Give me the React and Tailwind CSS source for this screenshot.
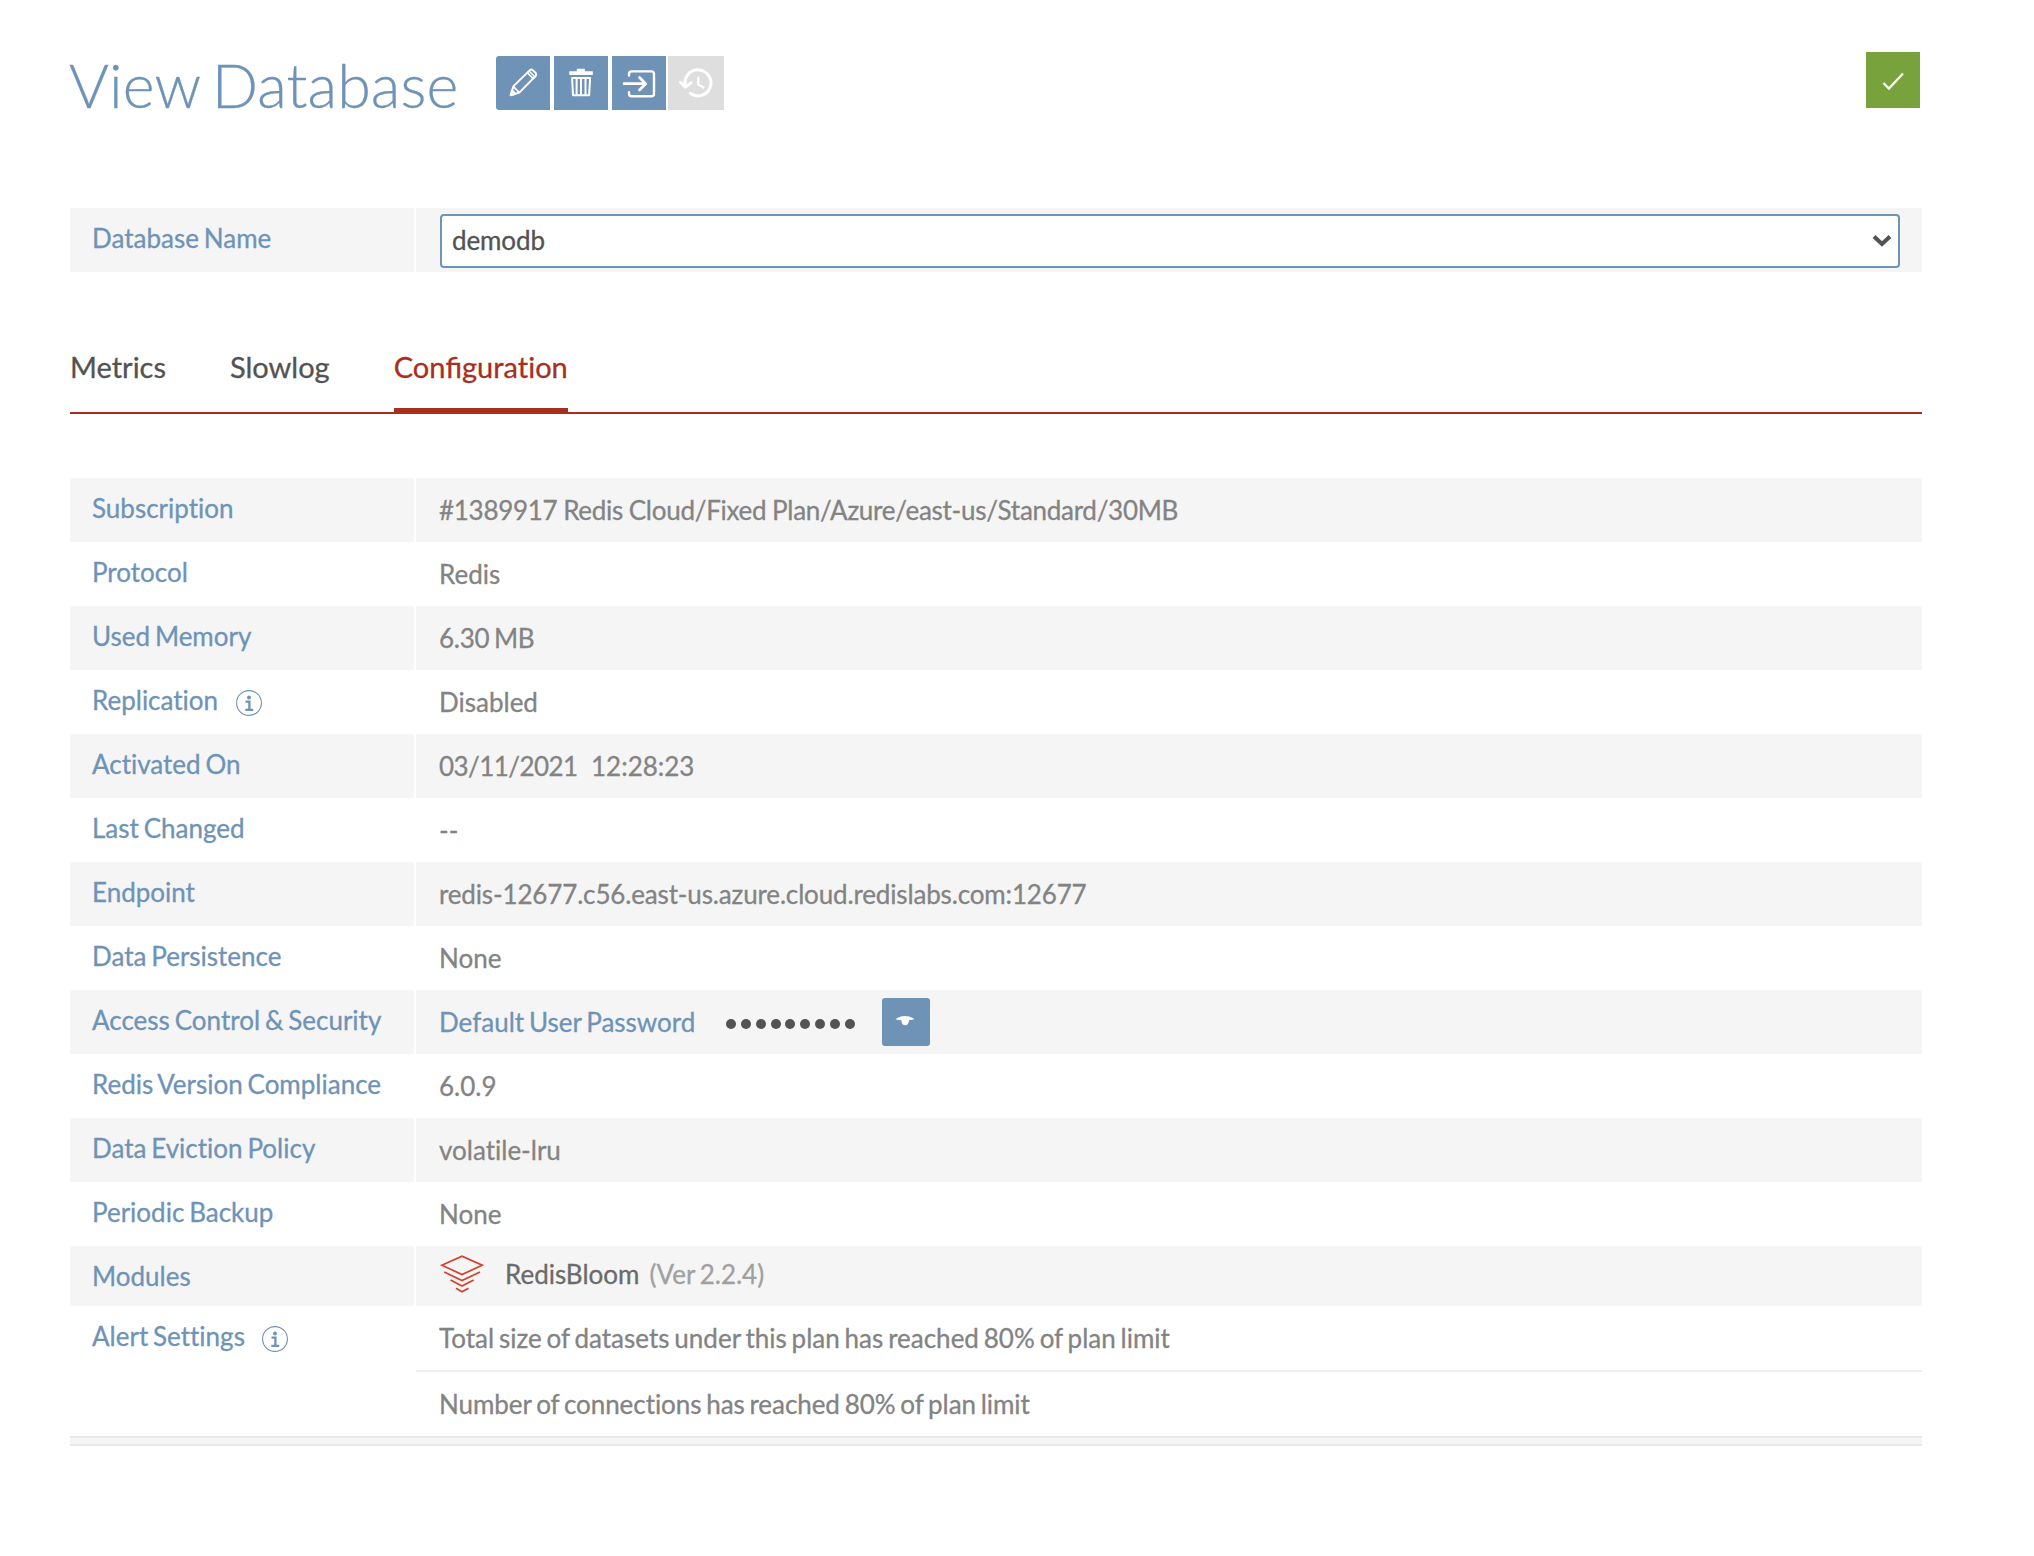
const INFO = (
  <svg className="size-[26px]" viewBox="0 0 26 26" fill="none" stroke="#6e93b6">
    <circle cx="13" cy="13" r="12.4" strokeWidth="1.1" />
    <circle cx="13" cy="7.600" r="2" fill="#6e93b6" stroke="none" />
    <path d="M9.500 11.700H13.400V19.600M9.300 19.900H17.200" strokeWidth="2.300" />
  </svg>
);

function Tool({ children, className = "" }) {
  return (
    <button className={`flex h-[54px] w-[54px] items-center justify-center bg-[#6e93b6] ${className}`}>
      {children}
    </button>
  );
}

function PencilIcon() {
  return (
    <svg className="size-[54px]" viewBox="0 0 54 54" fill="none" stroke="#fff" strokeWidth="2" strokeLinejoin="round">
      <path d="M15 39l2.300-8.600L33.600 14.400c1-1 2.400-1 3.400 0l2.400 2.400c1 1 1 2.400 0 3.400L23.300 36.600z" />
      <path d="M31.300 16.700l6 6M33 15l6 6M17.300 30.400l6 6.200" strokeWidth="1.600" />
      <path d="M14.600 39.300l1.300-5 3.600 3.600z" fill="#fff" />
    </svg>
  );
}

function TrashIcon() {
  return (
    <svg className="size-[54px]" viewBox="0 0 54 54" fill="none" stroke="#fff">
      <path d="M15.300 15.200h7.500v-2.400h8v2.400h8v3.700H15.300z" fill="#fff" stroke="none" />
      <path d="M18.100 22h18l-1 17.200H19z" strokeWidth="2" strokeLinejoin="round" />
      <path d="M22.600 23v15.500M27 23v15.500M31.500 23v15.500" strokeWidth="2" />
    </svg>
  );
}

function ExportIcon() {
  return (
    <svg className="size-[54px]" viewBox="0 0 54 54" fill="none" stroke="#fff" strokeWidth="2.400" strokeLinecap="round" strokeLinejoin="round">
      <path d="M17 19.500v-1.500a2.600 2.600 0 0 1 2.600-2.600H39.400a2.600 2.600 0 0 1 2.600 2.600V37.700a2.600 2.600 0 0 1-2.600 2.600H19.600a2.600 2.600 0 0 1-2.600-2.600V36.200" />
      <path d="M12 27.700H33M27.500 21.500l6.200 6.200-6.200 6.300" strokeWidth="2.700" />
    </svg>
  );
}

function HistoryIcon() {
  return (
    <svg className="size-[54px]" viewBox="0 0 54 54" fill="none" stroke="#fff" strokeWidth="3" strokeLinecap="round" strokeLinejoin="round">
      <path d="M17.200 29.500a13 13 0 1 1 5 7.800" />
      <path d="M12.500 26.300l5 4.900 5.500-4.400" />
      <path d="M30.300 21.700v6.800l5.200 3" strokeWidth="2.200" />
    </svg>
  );
}

function BloomIcon() {
  return (
    <svg className="h-[38px] w-[44px]" viewBox="0 0 44 38" fill="none" stroke="#d4402f" strokeWidth="1.700">
      <path d="M1.800 10.200L22 1.200l20.200 9L22 19.500z" />
      <path d="M4.200 17l17.800 8.500L40 17M10.500 25l11.500 6 11.700-6M16 33.200l6 3.600 6.500-3.600" />
    </svg>
  );
}

function Row({ label, info, shaded, height = "h-16", children }) {
  const bg = shaded ? "bg-[#f5f5f5]" : "bg-white";
  return (
    <div className={`flex gap-[2px] ${height}`}>
      <div className={`flex w-[344px] shrink-0 items-start gap-[17.5px] pl-[22px] text-[#6e93b6] ${bg}`}>
        <span className="leading-[60px]">{label}</span>
        {info && <span className="mt-[20px]">{INFO}</span>}
      </div>
      <div className={`flex grow items-center pl-[23px] text-[#838383] ${bg}`}>{children}</div>
    </div>
  );
}

export default function App() {
  return (
    <main className="h-[1556px] w-[2034px] bg-white pl-[70px] font-['Lato',sans-serif] text-[26px] leading-[64px] whitespace-pre [word-spacing:-1.8px] [font-variant-ligatures:none] [-webkit-text-stroke:0.3px]">
      <div className="w-[1852px]">
        <header className="flex h-[208px] items-start">
          <h1 className="mt-[49px] -ml-px w-[427px] text-[61px] leading-[72px] font-light tracking-[0.1px] text-[#6e93b6] [word-spacing:-5px]">View Database</h1>
          <div className="mt-[56px] flex">
            <Tool className="rounded-l-[3px]"><PencilIcon /></Tool>
            <Tool className="ml-1"><TrashIcon /></Tool>
            <Tool className="ml-1"><ExportIcon /></Tool>
            <div className="ml-[2px] flex h-[54px] w-[56px] items-center bg-[#dedede]"><HistoryIcon /></div>
          </div>
          <div className="mt-[52px] mr-[2px] ml-auto h-[56px] w-[54px] bg-[#78a23c]">
            <svg className="h-[56px] w-[54px]" viewBox="0 0 54 56" fill="none" stroke="#fff" strokeWidth="2.200">
              <path d="M17.500 31l5.400 5.600L37 21.500" />
            </svg>
          </div>
        </header>

        <Row label="Database Name" shaded>
          <div className="mt-[2px] mr-[22px] ml-px flex h-[54px] grow items-center justify-between rounded-[4px] border-2 border-[#6e93b6] bg-white pr-[6px] pl-[10px] text-[#535353]">
            <span className="mt-[-2px] leading-[50px] tracking-[-0.1px]">demodb</span>
            <svg className="h-[14px] w-[20px]" viewBox="0 0 20 14" fill="none" stroke="#535353" strokeWidth="4">
              <path d="M2 2.500l8 7.500 8-7.500" />
            </svg>
          </div>
        </Row>

        <nav className="mt-[66px] flex h-[76px] gap-[64px] border-b-2 border-[#a72f20] text-[29px] leading-[58px] text-[#535353]">
          <span>Metrics</span>
          <span>Slowlog</span>
          <span className="h-[76px] border-b-[6px] border-[#a72f20] text-[#a72f20]">
            Con<span className="[font-variant-ligatures:normal]">fi</span>guration
          </span>
        </nav>

        <section className="mt-[64px]">
          <Row label="Subscription" shaded>
            <span className="tracking-[-0.28px] [word-spacing:-0.6px]">#1389917 Redis Cloud/Fixed Plan/Azure/east-us/Standard/30MB</span>
          </Row>
          <Row label="Protocol">Redis</Row>
          <Row label="Used Memory" shaded><span className="tracking-[-0.25px]">6.30 MB</span></Row>
          <Row label="Replication" info>Disabled</Row>
          <Row label="Activated On" shaded>
            <span><span className="tracking-[-0.55px]">03/11/2021</span><span className="[word-spacing:0px]">  </span>12:28:23</span>
          </Row>
          <Row label="Last Changed">--</Row>
          <Row label="Endpoint" shaded>
            <span className="tracking-[-0.15px]">redis-12677.c56.east-us.azure.cloud.redislabs.com:12677</span>
          </Row>
          <Row label="Data Persistence">None</Row>
          <Row label="Access Control & Security" shaded>
            <span className="text-[#6e93b6]">Default User Password</span>
            <span className="mt-[4px] ml-[30.6px] flex gap-[4.87px]">
              {Array.from({ length: 9 }, (_, i) => (
                <i key={i} className="size-[10px] rounded-full bg-[#535353]" />
              ))}
            </span>
            <span className="ml-[27px] size-12 rounded-[3px] bg-[#6e93b6]">
              <svg className="size-12" viewBox="0 0 48 48" fill="#fff">
                <path d="M13.500 21.200c5-4.300 14-4.300 19 0-2 .500-4 .900-5.500 1 0 3-1.500 5-3.800 5s-3.800-2-3.800-5c-2-.1-4-.5-5.900-1z" />
              </svg>
            </span>
          </Row>
          <Row label="Redis Version Compliance">6.0.9</Row>
          <Row label="Data Eviction Policy" shaded>volatile-lru</Row>
          <Row label="Periodic Backup">None</Row>
          <Row label="Modules" shaded height="h-[60px]">
            <span className="mt-[-5px] ml-[1px]"><BloomIcon /></span>
            <span className="mt-[-4px] ml-[21px] text-[#6b6b6b]">RedisBloom</span>
            <span className="mt-[-4px] ml-[10px] text-[#a0a0a0]">(Ver 2.2.4)</span>
          </Row>
          <Row label="Alert Settings" info height="h-[130px]">
            <div className="ml-[-23px] grow">
              <p className="h-[66px] border-b-2 border-[#f0f0f0] pl-[23px] leading-[64px]">Total size of datasets under this plan has reached 80% of plan limit</p>
              <p className="h-[64px] pl-[23px] leading-[64px] tracking-[-0.06px]">Number of connections has reached 80% of plan limit</p>
            </div>
          </Row>
          <div className="h-[10px] border-y-2 border-[#e9e9e9] bg-[#f5f5f5]" />
        </section>
      </div>
    </main>
  );
}
